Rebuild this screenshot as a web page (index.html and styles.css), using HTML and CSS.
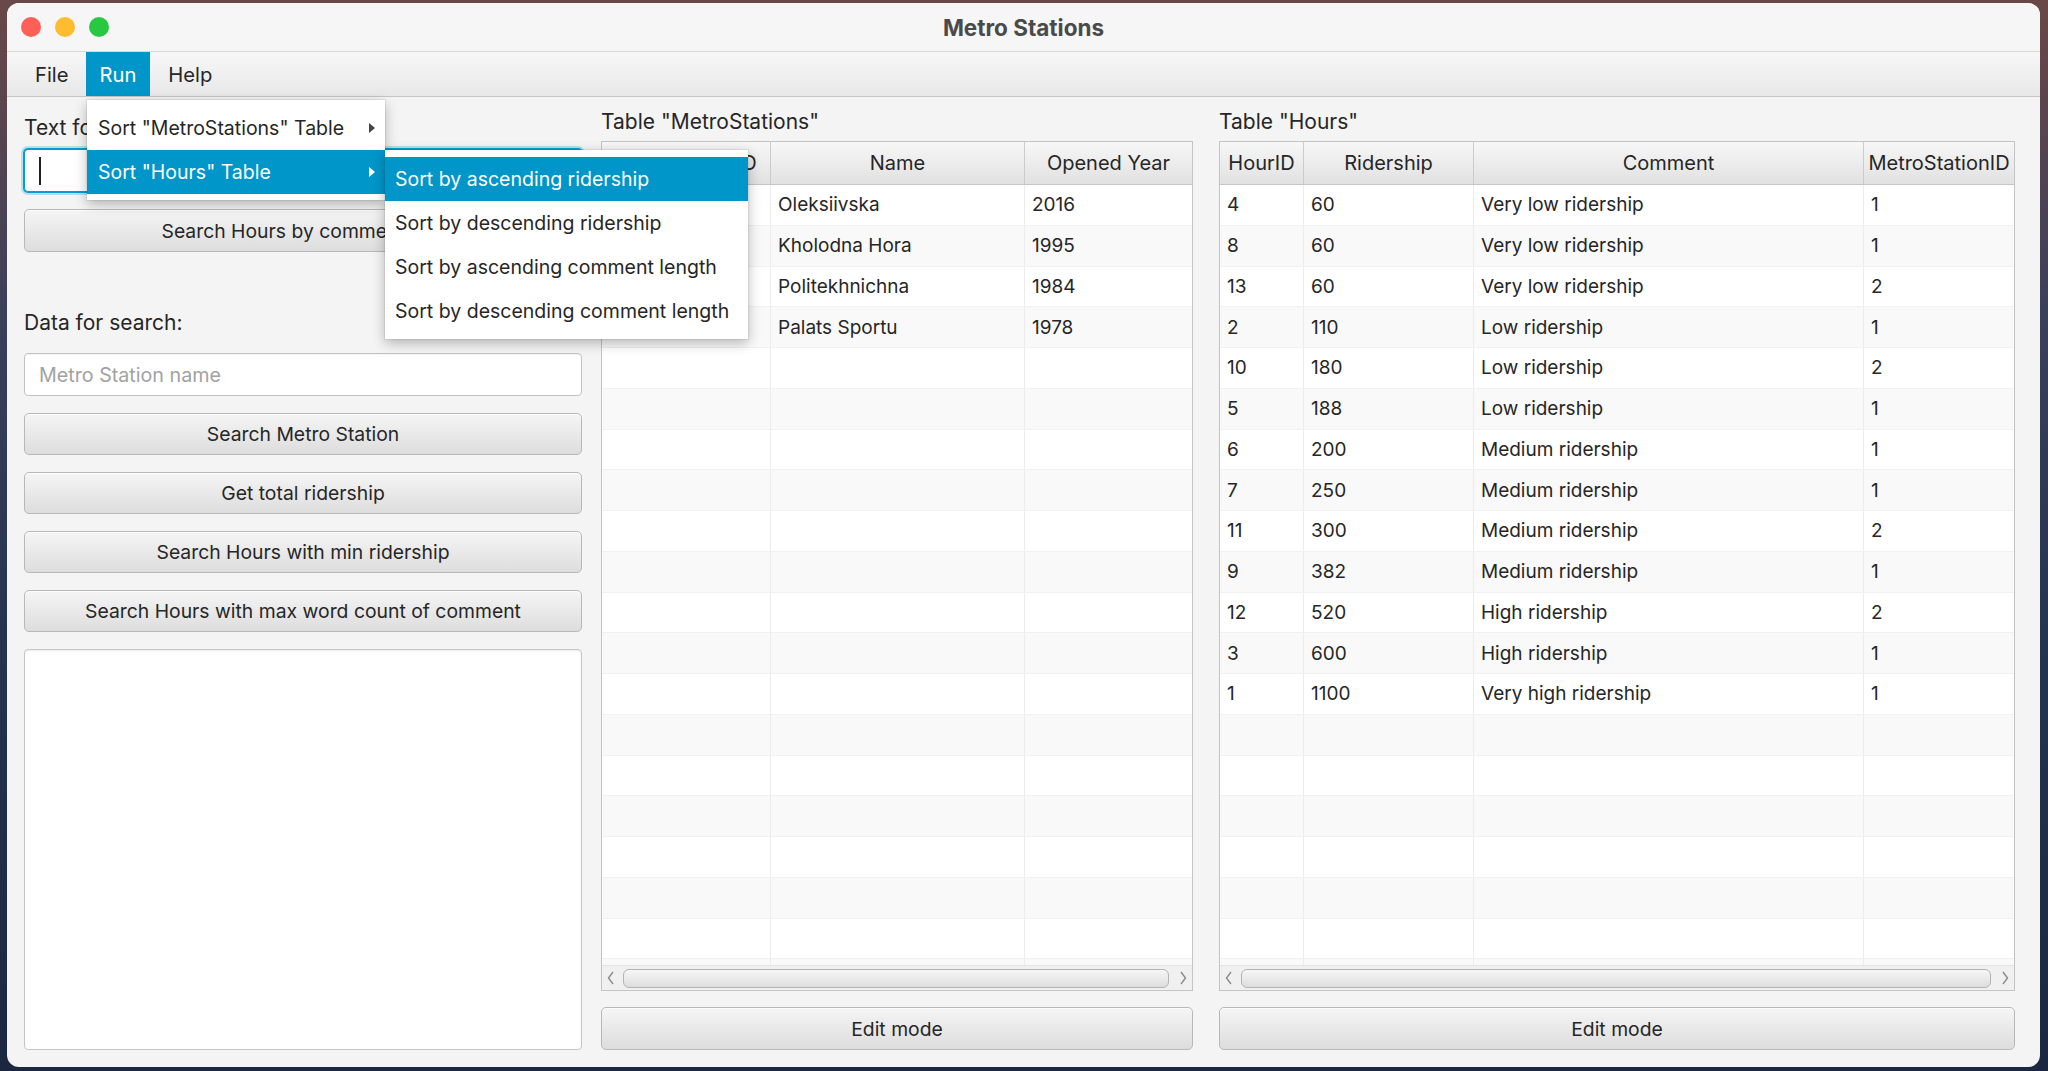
FILE: index.html
```html
<!DOCTYPE html>
<html>
<head>
<meta charset="utf-8">
<link rel="stylesheet" href="styles.css">
</head>
<body>
<div class="window">
  <div class="titlebar">
    <div class="lights">
      <span class="light red"></span><span class="light yellow"></span><span class="light green"></span>
    </div>
    <div class="title">Metro Stations</div>
    <div></div>
  </div>
  <div class="menubar">
    <div class="menu-item">File</div>
    <div class="menu-item active">Run</div>
    <div class="menu-item">Help</div>
  </div>
  <div class="content">
    <div class="left-col">
      <div class="label">Text for search:</div>
      <div class="field focused"><span class="caret"></span></div>
      <div class="button first-btn">Search Hours by comment text</div>
      <div class="label data-label">Data for search:</div>
      <div class="field"><span class="placeholder">Metro Station name</span></div>
      <div class="button-stack">
        <div class="button">Search Metro Station</div>
        <div class="button">Get total ridership</div>
        <div class="button">Search Hours with min ridership</div>
        <div class="button">Search Hours with max word count of comment</div>
      </div>
      <div class="textarea"></div>
    </div>

    <div class="table-col mid-col">
      <div class="label">Table "MetroStations"</div>
      <div class="table">
        <div class="row head mt-cols">
          <div class="cell">MetroStationID</div><div class="cell">Name</div><div class="cell">Opened Year</div>
        </div>
        <div class="tbody">
          <div class="row mt-cols"><div class="cell">1</div><div class="cell">Oleksiivska</div><div class="cell">2016</div></div>
          <div class="row mt-cols"><div class="cell">2</div><div class="cell">Kholodna Hora</div><div class="cell">1995</div></div>
          <div class="row mt-cols"><div class="cell">3</div><div class="cell">Politekhnichna</div><div class="cell">1984</div></div>
          <div class="row mt-cols"><div class="cell">4</div><div class="cell">Palats Sportu</div><div class="cell">1978</div></div>
          <div class="row mt-cols"><div class="cell"></div><div class="cell"></div><div class="cell"></div></div>
          <div class="row mt-cols"><div class="cell"></div><div class="cell"></div><div class="cell"></div></div>
          <div class="row mt-cols"><div class="cell"></div><div class="cell"></div><div class="cell"></div></div>
          <div class="row mt-cols"><div class="cell"></div><div class="cell"></div><div class="cell"></div></div>
          <div class="row mt-cols"><div class="cell"></div><div class="cell"></div><div class="cell"></div></div>
          <div class="row mt-cols"><div class="cell"></div><div class="cell"></div><div class="cell"></div></div>
          <div class="row mt-cols"><div class="cell"></div><div class="cell"></div><div class="cell"></div></div>
          <div class="row mt-cols"><div class="cell"></div><div class="cell"></div><div class="cell"></div></div>
          <div class="row mt-cols"><div class="cell"></div><div class="cell"></div><div class="cell"></div></div>
          <div class="row mt-cols"><div class="cell"></div><div class="cell"></div><div class="cell"></div></div>
          <div class="row mt-cols"><div class="cell"></div><div class="cell"></div><div class="cell"></div></div>
          <div class="row mt-cols"><div class="cell"></div><div class="cell"></div><div class="cell"></div></div>
          <div class="row mt-cols"><div class="cell"></div><div class="cell"></div><div class="cell"></div></div>
          <div class="row mt-cols"><div class="cell"></div><div class="cell"></div><div class="cell"></div></div>
          <div class="row mt-cols"><div class="cell"></div><div class="cell"></div><div class="cell"></div></div>
          <div class="row mt-cols"><div class="cell"></div><div class="cell"></div><div class="cell"></div></div>
        </div>
        <div class="hscroll">
          <svg class="arrow" width="10" height="16" viewBox="0 0 10 16"><path d="M7 2 L2.5 8 L7 14" fill="none" stroke="#8a8a8a" stroke-width="1.4"/></svg>
          <div class="thumb"></div>
          <svg class="arrow" width="10" height="16" viewBox="0 0 10 16"><path d="M3 2 L7.5 8 L3 14" fill="none" stroke="#8a8a8a" stroke-width="1.4"/></svg>
        </div>
      </div>
      <div class="button edit-btn">Edit mode</div>
    </div>

    <div class="table-col right-col">
      <div class="label">Table "Hours"</div>
      <div class="table">
        <div class="row head h-cols">
          <div class="cell">HourID</div><div class="cell">Ridership</div><div class="cell">Comment</div><div class="cell">MetroStationID</div>
        </div>
        <div class="tbody">
          <div class="row h-cols"><div class="cell">4</div><div class="cell">60</div><div class="cell">Very low ridership</div><div class="cell">1</div></div>
          <div class="row h-cols"><div class="cell">8</div><div class="cell">60</div><div class="cell">Very low ridership</div><div class="cell">1</div></div>
          <div class="row h-cols"><div class="cell">13</div><div class="cell">60</div><div class="cell">Very low ridership</div><div class="cell">2</div></div>
          <div class="row h-cols"><div class="cell">2</div><div class="cell">110</div><div class="cell">Low ridership</div><div class="cell">1</div></div>
          <div class="row h-cols"><div class="cell">10</div><div class="cell">180</div><div class="cell">Low ridership</div><div class="cell">2</div></div>
          <div class="row h-cols"><div class="cell">5</div><div class="cell">188</div><div class="cell">Low ridership</div><div class="cell">1</div></div>
          <div class="row h-cols"><div class="cell">6</div><div class="cell">200</div><div class="cell">Medium ridership</div><div class="cell">1</div></div>
          <div class="row h-cols"><div class="cell">7</div><div class="cell">250</div><div class="cell">Medium ridership</div><div class="cell">1</div></div>
          <div class="row h-cols"><div class="cell">11</div><div class="cell">300</div><div class="cell">Medium ridership</div><div class="cell">2</div></div>
          <div class="row h-cols"><div class="cell">9</div><div class="cell">382</div><div class="cell">Medium ridership</div><div class="cell">1</div></div>
          <div class="row h-cols"><div class="cell">12</div><div class="cell">520</div><div class="cell">High ridership</div><div class="cell">2</div></div>
          <div class="row h-cols"><div class="cell">3</div><div class="cell">600</div><div class="cell">High ridership</div><div class="cell">1</div></div>
          <div class="row h-cols"><div class="cell">1</div><div class="cell">1100</div><div class="cell">Very high ridership</div><div class="cell">1</div></div>
          <div class="row h-cols"><div class="cell"></div><div class="cell"></div><div class="cell"></div><div class="cell"></div></div>
          <div class="row h-cols"><div class="cell"></div><div class="cell"></div><div class="cell"></div><div class="cell"></div></div>
          <div class="row h-cols"><div class="cell"></div><div class="cell"></div><div class="cell"></div><div class="cell"></div></div>
          <div class="row h-cols"><div class="cell"></div><div class="cell"></div><div class="cell"></div><div class="cell"></div></div>
          <div class="row h-cols"><div class="cell"></div><div class="cell"></div><div class="cell"></div><div class="cell"></div></div>
          <div class="row h-cols"><div class="cell"></div><div class="cell"></div><div class="cell"></div><div class="cell"></div></div>
          <div class="row h-cols"><div class="cell"></div><div class="cell"></div><div class="cell"></div><div class="cell"></div></div>
        </div>
        <div class="hscroll">
          <svg class="arrow" width="10" height="16" viewBox="0 0 10 16"><path d="M7 2 L2.5 8 L7 14" fill="none" stroke="#8a8a8a" stroke-width="1.4"/></svg>
          <div class="thumb"></div>
          <svg class="arrow" width="10" height="16" viewBox="0 0 10 16"><path d="M3 2 L7.5 8 L3 14" fill="none" stroke="#8a8a8a" stroke-width="1.4"/></svg>
        </div>
      </div>
      <div class="button edit-btn">Edit mode</div>
    </div>
  </div>

  <div class="popup run-popup">
    <div class="popup-item">Sort "MetroStations" Table<span class="sub-arrow"></span></div>
    <div class="popup-item selected">Sort "Hours" Table<span class="sub-arrow"></span></div>
  </div>
  <div class="popup sub-popup">
    <div class="popup-item selected">Sort by ascending ridership</div>
    <div class="popup-item">Sort by descending ridership</div>
    <div class="popup-item">Sort by ascending comment length</div>
    <div class="popup-item">Sort by descending comment length</div>
  </div>
</div>
</body>
</html>
```

FILE: styles.css
```css
* { box-sizing: border-box; }
html, body { margin: 0; padding: 0; }
body {
  width: 2048px;
  height: 1071px;
  overflow: hidden;
  background: linear-gradient(to bottom, #6a4848 0%, #3a3f5a 30%, #24344f 60%, #1b2740 100%);
  font-family: "Inter", "Liberation Sans", sans-serif;
  font-size: 19px;
  color: #262626;
}
.window {
  position: relative;
  margin: 3px 0 0 7px;
  width: 2033px;
  height: 1064px;
  border-radius: 12px;
  background: #f4f4f4;
  overflow: hidden;
  display: flex;
  flex-direction: column;
}
.titlebar {
  height: 49px;
  flex: none;
  display: grid;
  grid-template-columns: 1fr auto 1fr;
  align-items: center;
  background: #f6f6f6;
  border-bottom: 1px solid #d8d8d8;
}
.lights { display: flex; gap: 14px; padding-left: 14px; }
.light { width: 20px; height: 20px; border-radius: 50%; display: block; }
.red { background: #fe5f57; }
.yellow { background: #febc2e; }
.green { background: #28c840; }
.title {
  font-weight: 700;
  font-size: 22.5px;
  color: #4a4a4a;
}
.menubar {
  height: 45px;
  flex: none;
  display: flex;
  gap: 4px;
  padding-left: 14px;
  background: linear-gradient(to bottom, #f7f7f7, #e8e8e8);
  border-bottom: 1px solid #c6c6c6;
}
.menu-item {
  padding: 0 14px 0 14px;
  display: flex;
  align-items: center;
  font-size: 20.2px;
  color: #262626;
}
.menu-item.active { background: #0096c9; color: #fff; padding: 0 14px 0 13px; }
.content {
  flex: 1;
  display: flex;
  padding: 0 25px 17px 17px;
  min-height: 0;
}
.label { line-height: 24px; height: 24px; font-size: 21px; color: #262626; white-space: nowrap; }
.left-col {
  width: 558px;
  margin-right: 19px;
  display: flex;
  flex-direction: column;
  padding-top: 19px;
}
.field {
  height: 43px;
  margin-top: 9px;
  background: #fff;
  border: 1px solid #c3c3c3;
  border-radius: 4px;
  display: flex;
  align-items: center;
  padding-left: 14px;
  box-shadow: inset 0 1px 1px rgba(0,0,0,0.05);
}
.field.focused {
  border-color: #039ed3;
  box-shadow: 0 0 0 1px #039ed3, 0 0 0 3px rgba(3,158,211,0.25);
}
.caret { width: 2px; height: 28px; background: #222; display: block; }
.placeholder { color: #a2a2a2; font-size: 19.7px; }
.button {
  height: 42px;
  border: 1px solid #b8b8b8;
  border-radius: 5px;
  background: linear-gradient(to bottom, #f5f5f5, #dddddd);
  box-shadow: inset 0 1px 0 rgba(255,255,255,0.8);
  display: flex;
  align-items: center;
  justify-content: center;
  white-space: nowrap;
  overflow: hidden;
  font-size: 19.35px;
  color: #262626;
}
.first-btn { margin-top: 17px; height: 43px; }
.data-label { margin-top: 59px; }
.data-label + .field { margin-top: 18px; }
.button-stack {
  display: flex;
  flex-direction: column;
  gap: 17px;
  margin-top: 17px;
}
.textarea {
  flex: 1;
  margin-top: 17px;
  background: #fff;
  border: 1px solid #c6c6c6;
  border-radius: 4px;
  box-shadow: inset 0 1px 2px rgba(0,0,0,0.08);
}
.table-col {
  display: flex;
  flex-direction: column;
  padding-top: 13px;
}
.mid-col { width: 592px; margin-right: 26px; }
.right-col { width: 796px; }
.table {
  flex: 1;
  margin-top: 7px;
  border: 1px solid #c4c4c4;
  background: #fff;
  display: flex;
  flex-direction: column;
  min-height: 0;
}
.tbody { flex: 1; overflow: hidden; min-height: 0; }
.row { display: grid; height: 40.75px; }
.mt-cols { grid-template-columns: 169px 254px 1fr; }
.h-cols { grid-template-columns: 84px 170px 390px 1fr; }
.tbody .row:nth-child(even) { background: #f9f9f9; }
.tbody .row { border-bottom: 1px solid #f1f1f1; }
.cell {
  border-right: 1px solid #ececec;
  padding-left: 7px;
  display: flex;
  align-items: center;
  white-space: nowrap;
  overflow: hidden;
}
.cell:last-child { border-right: none; }
.row.head {
  height: 43px;
  flex: none;
  background: linear-gradient(to bottom, #f7f7f7, #e1e1e1);
  border-bottom: 1px solid #c4c4c4;
  font-size: 20px;
}
.head .cell {
  justify-content: center;
  padding: 0;
  border-right: 1px solid #cbcbcb;
}
.head .cell:last-child { border-right: none; }
.hscroll {
  height: 25px;
  flex: none;
  display: flex;
  align-items: center;
  background: #f0f0f0;
  border-top: 1px solid #e4e4e4;
  padding: 0 4px;
  gap: 3px;
}
.arrow { flex: none; }
.thumb {
  flex: 1;
  height: 19px;
  margin: 0 6px 0 4px;
  border: 1px solid #b3b3b3;
  border-radius: 6px;
  background: linear-gradient(to bottom, #f6f6f6, #dedede);
}
.edit-btn { margin-top: 16px; height: 43px; flex: none; }

.popup {
  position: absolute;
  background: #ffffff;
  box-shadow: 0 4px 12px rgba(0,0,0,0.28), 0 0 0 1px rgba(0,0,0,0.06);
}
.run-popup { left: 80px; top: 97px; width: 298px; padding: 6px 0; }
.sub-popup { left: 378px; top: 147px; width: 363px; padding: 7px 0 6px; }
.popup-item {
  height: 44px;
  display: flex;
  align-items: center;
  padding-left: 11px;
  position: relative;
  white-space: nowrap;
  font-size: 19.5px;
  color: #262626;
}
.sub-popup .popup-item { padding-left: 10px; }
.popup-item.selected { background: #0096c9; color: #fff; }
.sub-arrow {
  position: absolute;
  right: 10px;
  top: 50%;
  margin-top: -5px;
  width: 0; height: 0;
  border-top: 5px solid transparent;
  border-bottom: 5px solid transparent;
  border-left: 6px solid #444;
}
.popup-item.selected .sub-arrow { border-left-color: #fff; }
```
